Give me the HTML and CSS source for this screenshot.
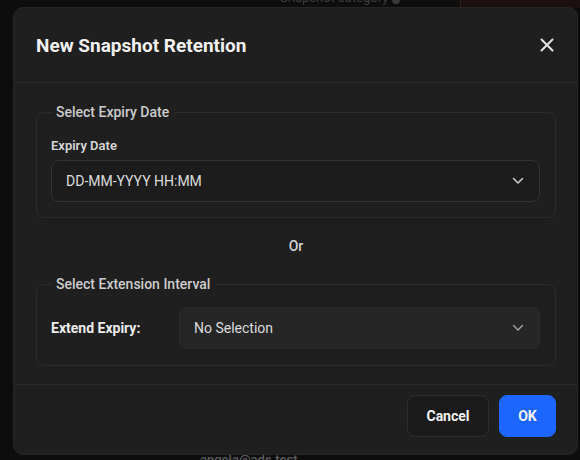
FILE: index.html
```html
<!DOCTYPE html>
<html lang="en">
<head>
<meta charset="utf-8">
<title>New Snapshot Retention</title>
<link rel="stylesheet" href="styles.css">
</head>
<body>
<div class="backdrop">
  <div class="bg-top">
    <span class="bg-text">Snapshot category</span>
    <span class="bg-dot"></span>
    <div class="bg-red"></div>
  </div>
  <div class="bg-bottom">angela@ads.test</div>
</div>

<div class="modal" role="dialog" aria-labelledby="dlg-title">
  <header class="modal-header">
    <h1 id="dlg-title" class="modal-title">New Snapshot Retention</h1>
    <button class="close-btn" aria-label="Close">
      <svg width="14" height="14" viewBox="0 0 14 14"><path d="M1.5 1.5 L12.5 12.5 M12.5 1.5 L1.5 12.5" stroke="#e6e6e6" stroke-width="2" stroke-linecap="round" fill="none"/></svg>
    </button>
  </header>

  <div class="modal-body">
    <fieldset class="group">
      <legend class="group-legend">Select Expiry Date</legend>
      <div class="field-label">Expiry Date</div>
      <div class="select select-dark">
        <span class="select-text">DD-MM-YYYY HH:MM</span>
        <svg class="chevron" width="12" height="8" viewBox="0 0 12 8"><path d="M1.5 1.5 L6 6 L10.5 1.5" stroke="#c8c8c8" stroke-width="1.6" fill="none" stroke-linecap="round" stroke-linejoin="round"/></svg>
      </div>
    </fieldset>

    <div class="or">Or</div>

    <fieldset class="group group-2">
      <legend class="group-legend">Select Extension Interval</legend>
      <div class="row">
        <div class="row-label">Extend Expiry:</div>
        <div class="select select-light">
          <span class="select-text">No Selection</span>
          <svg class="chevron" width="12" height="8" viewBox="0 0 12 8"><path d="M1.5 1.5 L6 6 L10.5 1.5" stroke="#a8a8a8" stroke-width="1.4" fill="none" stroke-linecap="round" stroke-linejoin="round"/></svg>
        </div>
      </div>
    </fieldset>
  </div>

  <footer class="modal-footer">
    <button class="btn btn-cancel">Cancel</button>
    <button class="btn btn-ok">OK</button>
  </footer>
</div>
</body>
</html>
```

FILE: styles.css
```css
* { box-sizing: border-box; }

html, body {
  margin: 0;
  padding: 0;
  width: 580px;
  height: 460px;
  overflow: hidden;
  background: #0c0c0c;
  font-family: Roboto, "Liberation Sans", Arial, sans-serif;
}

.backdrop {
  position: absolute;
  inset: 0;
  background: #0d0d0d;
}

.bg-top {
  position: absolute;
  left: 0;
  top: 0;
  width: 580px;
  height: 8px;
}

.bg-text {
  position: absolute;
  left: 280px;
  top: -10px;
  font-size: 13px;
  color: #3e3e3e;
}

.bg-dot {
  position: absolute;
  left: 392px;
  top: -4px;
  width: 8px;
  height: 8px;
  border-radius: 50%;
  background: #3a3a3a;
}

.bg-red {
  position: absolute;
  left: 460px;
  top: 0;
  width: 120px;
  height: 8px;
  background: #1b0f10;
  border-left: 1px solid #3a1c1e;
}

.bg-bottom {
  position: absolute;
  left: 200px;
  top: 452px;
  font-size: 13px;
  font-weight: 500;
  color: #5e5e5e;
}

.modal {
  position: absolute;
  left: 13px;
  top: 7px;
  width: 565px;
  height: 448px;
  background: #1f1f1f;
  border: 1px solid #262626;
  border-radius: 10px;
  display: flex;
  flex-direction: column;
}

.modal-header {
  height: 75px;
  flex: none;
  display: flex;
  align-items: center;
  justify-content: space-between;
  padding: 0 23px 0 22px;
  border-bottom: 1px solid #2b2b2b;
}

.modal-title {
  margin: 0;
  font-size: 19px;
  font-weight: 700;
  color: #f2f2f2;
  letter-spacing: 0;
}

.close-btn {
  background: none;
  border: 0;
  padding: 0;
  width: 14px;
  height: 14px;
  display: flex;
  cursor: pointer;
}

.modal-body {
  flex: 1;
  padding: 19px 21px 0 22px;
  display: flex;
  flex-direction: column;
}

.group {
  margin: 0;
  border: 1px solid #2d2d2d;
  border-radius: 8px;
  padding: 0 15px 15px 14px;
  min-width: 0;
}

.group-legend {
  padding: 0 5px;
  font-size: 14px;
  font-weight: 500;
  line-height: 20px;
  color: #cdcdcd;
}

.field-label {
  margin-top: 15px;
  font-size: 13px;
  font-weight: 600;
  line-height: 17px;
  color: #d6d6d6;
}

.select {
  height: 42px;
  border-radius: 8px;
  display: flex;
  align-items: center;
  justify-content: space-between;
  padding: 0 15px 0 14px;
}

.select-dark {
  margin-top: 6px;
  background: #1c1c1c;
  border: 1px solid #333333;
}

.select-light {
  flex: 1;
  background: #262626;
  border: 1px solid #2c2c2c;
}

.select-text {
  font-size: 14px;
  color: #dcdcdc;
}

.chevron { flex: none; }

.or {
  text-align: center;
  margin: 19px 0 19px;
  font-size: 14px;
  font-weight: 500;
  line-height: 18px;
  color: #d2d2d2;
}

.group-2 { padding-bottom: 16px; }

.row {
  margin-top: 13px;
  display: flex;
  align-items: center;
}

.row-label {
  width: 128px;
  flex: none;
  font-size: 14px;
  font-weight: 700;
  color: #ececec;
}

.modal-footer {
  height: 70px;
  flex: none;
  border-top: 1px solid #2b2b2b;
  display: flex;
  justify-content: flex-end;
  align-items: flex-start;
  gap: 10px;
  padding: 10px 21px 0 0;
}

.btn {
  height: 42px;
  border-radius: 8px;
  font-family: inherit;
  font-size: 14px;
  font-weight: 700;
  color: #f4f4f4;
  cursor: pointer;
}

.btn-cancel {
  width: 82px;
  background: #1b1b1b;
  border: 1px solid #2e2e2e;
}

.btn-ok {
  width: 57px;
  background: #1c66ff;
  border: 1px solid #1c66ff;
}
```
